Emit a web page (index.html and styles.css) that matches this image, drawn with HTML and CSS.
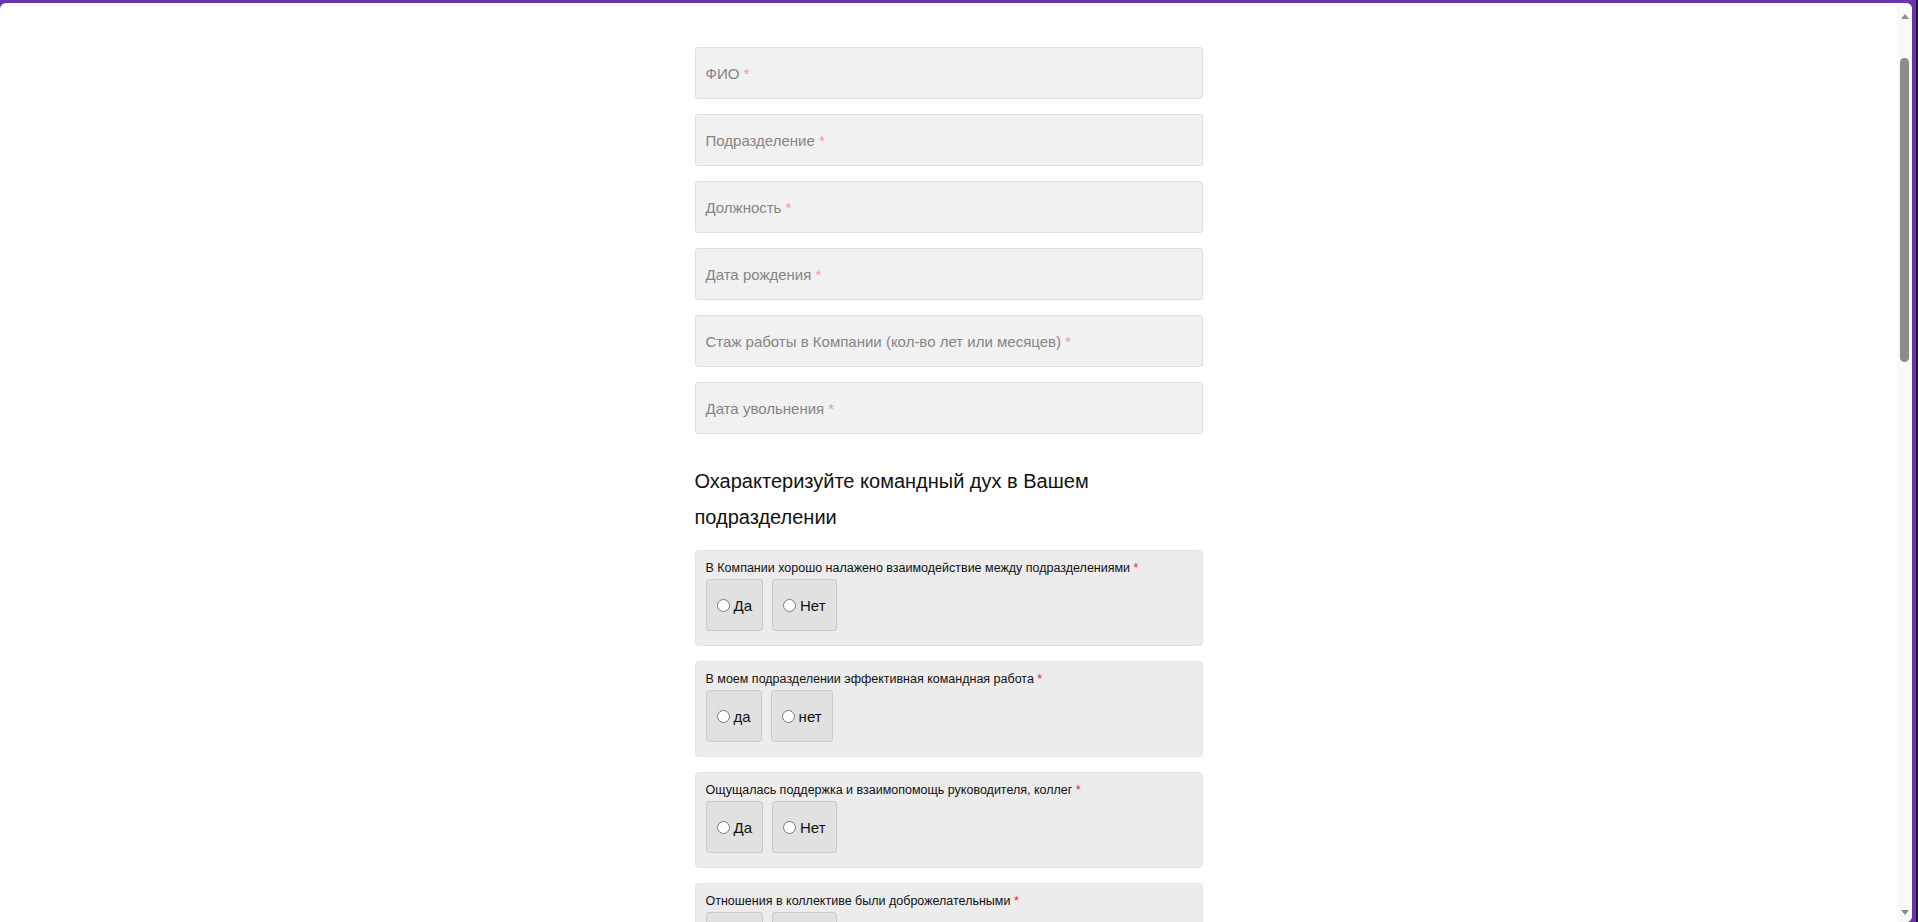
FILE: index.html
```html
<!DOCTYPE html>
<html lang="ru">
<head>
<meta charset="utf-8">
<title>Анкета</title>
<link rel="stylesheet" href="styles.css">
</head>
<body>
<div class="frame">
  <div class="window">
    <main class="viewport">
      <form class="form">
        <div class="field"><span class="ph">ФИО <span class="req-light">*</span></span></div>
        <div class="field"><span class="ph">Подразделение <span class="req-light">*</span></span></div>
        <div class="field"><span class="ph">Должность <span class="req-light">*</span></span></div>
        <div class="field"><span class="ph">Дата рождения <span class="req-light">*</span></span></div>
        <div class="field"><span class="ph">Стаж работы в Компании (кол-во лет или месяцев) <span class="req-light">*</span></span></div>
        <div class="field"><span class="ph">Дата увольнения <span class="req-light">*</span></span></div>

        <h2 class="section-title">Охарактеризуйте командный дух в Вашем подразделении</h2>

        <div class="card">
          <div class="question">В Компании хорошо налажено взаимодействие между подразделениями <span class="req">*</span></div>
          <div class="options">
            <label class="option"><input type="radio" name="q1">Да</label>
            <label class="option"><input type="radio" name="q1">Нет</label>
          </div>
        </div>

        <div class="card">
          <div class="question">В моем подразделении эффективная командная работа <span class="req">*</span></div>
          <div class="options">
            <label class="option"><input type="radio" name="q2">да</label>
            <label class="option"><input type="radio" name="q2">нет</label>
          </div>
        </div>

        <div class="card">
          <div class="question">Ощущалась поддержка и взаимопомощь руководителя, коллег <span class="req">*</span></div>
          <div class="options">
            <label class="option"><input type="radio" name="q3">Да</label>
            <label class="option"><input type="radio" name="q3">Нет</label>
          </div>
        </div>

        <div class="card">
          <div class="question">Отношения в коллективе были доброжелательными <span class="req">*</span></div>
          <div class="options">
            <label class="option"><input type="radio" name="q4">Да</label>
            <label class="option"><input type="radio" name="q4">Нет</label>
          </div>
        </div>
      </form>
    </main>
    <div class="scrollbar">
      <div class="arrow arrow-up"></div>
      <div class="track"><div class="thumb"></div></div>
      <div class="arrow arrow-down"></div>
    </div>
  </div>
</div>
</body>
</html>
```
FILE: styles.css
```css
html, body {
  margin: 0;
  padding: 0;
  height: 100%;
  overflow: hidden;
}

body {
  background: #6b34aa;
  font-family: "Liberation Sans", Arial, sans-serif;
}

.frame {
  height: 922px;
  box-sizing: border-box;
  padding: 3px 4px 0 0;
  border-right: 2px solid #1f1f1f;
  display: flex;
}

.window {
  flex: 1;
  display: flex;
  background: #ffffff;
  border-radius: 6px 6px 6px 0;
  overflow: hidden;
}

.viewport {
  flex: 1;
  display: flex;
  justify-content: center;
  padding: 44px 0 0 0;
  overflow: hidden;
}

.form {
  width: 508px;
  display: flex;
  flex-direction: column;
  gap: 15px;
}

.field {
  height: 52px;
  box-sizing: border-box;
  border: 1px solid #dedede;
  border-radius: 3px;
  background: #f1f1f1;
  display: flex;
  align-items: center;
  padding: 0 10px;
  font-size: 15px;
  color: #858585;
  flex-shrink: 0;
}

.req-light {
  color: #f29a9a;
}

.req {
  color: #e8242a;
}

.section-title {
  margin: 14px 0 0;
  font-weight: normal;
  font-size: 20px;
  line-height: 36px;
  color: #111;
}

.card {
  flex-shrink: 0;
  box-sizing: border-box;
  height: 96px;
  border: 1px solid #e2e2e2;
  border-radius: 4px;
  background: #ececec;
  padding: 9px 10px 14px;
}

.question {
  font-size: 12.5px;
  line-height: 17px;
  color: #111;
}

.options {
  display: flex;
  gap: 9px;
  margin-top: 2px;
}

.option {
  height: 52px;
  box-sizing: border-box;
  display: flex;
  align-items: center;
  padding: 0 10px;
  border: 1px solid #cbcbcb;
  border-radius: 3px;
  background: #e1e1e1;
  font-size: 15px;
  color: #111;
}

.option input {
  margin: 0 4px 0 0;
  width: 13px;
  height: 13px;
}

.scrollbar {
  width: 15px;
  background: #f9f9f9;
  display: flex;
  flex-direction: column;
  align-items: center;
}

.arrow {
  width: 0;
  height: 0;
  border-left: 4px solid transparent;
  border-right: 4px solid transparent;
}

.arrow-up {
  margin-top: 11px;
  border-bottom: 5px solid #8b8b8b;
}

.arrow-down {
  margin-bottom: 7px;
  border-top: 5px solid #8b8b8b;
}

.track {
  flex: 1;
  width: 100%;
  display: flex;
  justify-content: center;
  padding-top: 39px;
  box-sizing: border-box;
}

.thumb {
  width: 9px;
  height: 304px;
  border-radius: 5px;
  background: #8b8b8b;
}
```
